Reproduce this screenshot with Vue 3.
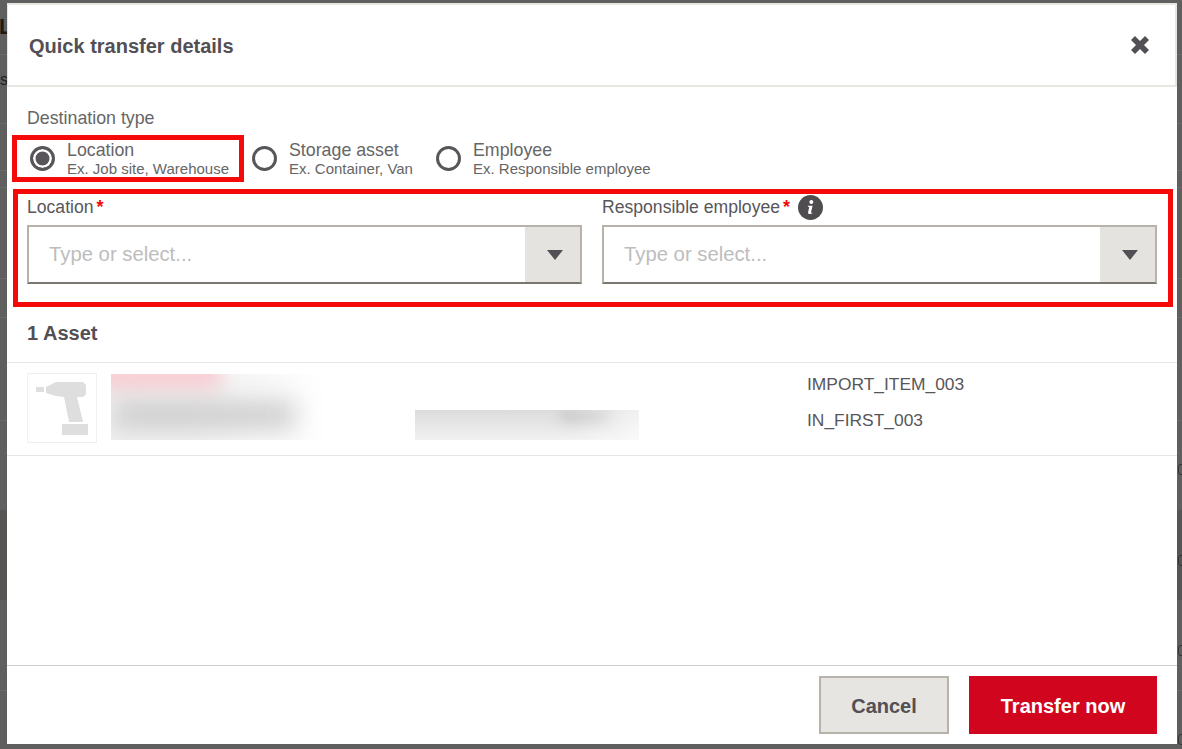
<script setup>
const radios = [
  { title: 'Location', hint: 'Ex. Job site, Warehouse', checked: true, width: 222 },
  { title: 'Storage asset', hint: 'Ex. Container, Van', checked: false, width: 184 },
  { title: 'Employee', hint: 'Ex. Responsible employee', checked: false, width: 240 }
]
const boxes = [464, 555, 645, 734]
</script>

<template>
  <div class="page">
    <span class="bg-letter bg-l">L</span>
    <span class="bg-letter bg-s">s</span>
    <span v-for="y in boxes" :key="y" class="bg-box" :style="{ top: y + 'px' }"></span>
    <div class="modal">
      <header class="head">
        <h1>Quick transfer details</h1>
        <svg class="close" viewBox="0 0 18 18" width="18" height="18"><path d="M4 0 9 5 14 0 18 4 13 9 18 14 14 18 9 13 4 18 0 14 5 9 0 4Z" fill="#524f55"/></svg>
      </header>

      <section class="form">
        <div class="dest-label">Destination type</div>
        <div class="radios">
          <div v-for="r in radios" :key="r.title" class="radio" :style="{ width: r.width + 'px' }">
            <span class="dot" :class="{ on: r.checked }"></span>
            <div class="radio-text">
              <div class="radio-title">{{ r.title }}</div>
              <div class="radio-hint">{{ r.hint }}</div>
            </div>
          </div>
        </div>
        <div class="fields">
          <div class="field">
            <div class="field-label">Location<span class="req">*</span></div>
            <div class="select">
              <span class="ph">Type or select...</span>
              <span class="arrow"><i></i></span>
            </div>
          </div>
          <div class="field">
            <div class="field-label">Responsible employee<span class="req">*</span>
              <svg class="info" viewBox="0 0 24 24" width="25" height="25"><circle cx="12" cy="12" r="12" fill="#4f4d50"/><circle cx="12.800" cy="6.800" r="1.900" fill="#fff"/><path d="M9.600 10.200h4.400l-1.500 6.400c-.1.500.3.600 1.200.2l-.2 1c-1 .6-4.300 1-3.800-1.300l1.100-5.100-1.300-.2z" fill="#fff"/></svg>
            </div>
            <div class="select">
              <span class="ph">Type or select...</span>
              <span class="arrow"><i></i></span>
            </div>
          </div>
        </div>
      </section>

      <h2 class="count">1 Asset</h2>

      <div class="asset">
        <div class="thumb">
          <svg viewBox="0 0 68 68" width="68" height="68"><path d="M8 13h8v5H8zM18 13 28 8H55L58 11V20L55 23H49L55 48H41L36 23 28 22 18 19Z" fill="#dedede"/><rect x="34" y="50" width="26" height="11" fill="#dedede"/></svg>
        </div>
        <div class="blur-a"><div class="blur-fade"></div><div class="blur-red"></div><div class="blur-gray"></div></div>
        <div class="blur-b"><div class="blur-streak"></div></div>
        <div class="codes">
          <div>IMPORT_ITEM_003</div>
          <div>IN_FIRST_003</div>
        </div>
      </div>

      <footer class="foot">
        <button class="btn cancel">Cancel</button>
        <button class="btn go">Transfer now</button>
      </footer>
    </div>
    <div class="mark mark-radio"></div>
    <div class="mark mark-fields"></div>
  </div>
</template>

<style>
html, body { margin: 0; background: #5f5f5f; }
</style>

<style scoped>
.page {
  position: relative;
  width: 1182px;
  height: 749px;
  box-sizing: border-box;
  padding: 3px 5px 5px 7px;
  overflow: hidden;
  background-color: #5f5f5f;
  background-image:
    linear-gradient(#6a6a6a, #6a6a6a),
    linear-gradient(#6a6a6a, #6a6a6a),
    linear-gradient(#6a6a6a, #6a6a6a),
    linear-gradient(#6a6a6a, #6a6a6a),
    linear-gradient(#6a6a6a, #6a6a6a),
    linear-gradient(#6a6a6a, #6a6a6a),
    linear-gradient(#6a6a6a, #6a6a6a),
    linear-gradient(#6a6a6a, #6a6a6a),
    linear-gradient(#565553, #565553);
  background-size: 100% 1px, 100% 1px, 100% 1px, 100% 1px, 100% 1px, 100% 1px, 100% 1px, 100% 1px, 100% 90px;
  background-position: 0 54px, 0 123px, 0 170px, 0 187px, 0 278px, 0 317px, 0 420px, 0 690px, 0 510px;
  background-repeat: no-repeat;
  font-family: "Liberation Sans", Arial, sans-serif;
  color: #58565a;
}
.bg-letter { position: absolute; left: 0; color: #1f1a15; }
.bg-l { top: 14px; font-size: 22px; font-weight: 700; left: -1px; }
.bg-s { top: 71px; font-size: 16px; color: #222; left: 0; }
.bg-box {
  position: absolute;
  left: 1178px;
  width: 12px;
  height: 11px;
  box-sizing: border-box;
  border: 1px solid #333;
  border-radius: 3px;
}
.modal {
  position: relative;
  height: 741px;
  background: #fff;
  display: flex;
  flex-direction: column;
}
.head {
  box-sizing: border-box;
  height: 84px;
  flex: none;
  border: 2px solid #e7e6e0;
  border-left-width: 1px;
  display: flex;
  align-items: center;
  justify-content: space-between;
  padding: 0 26px 0 21px;
}
.head h1 { margin: 2px 0 0; font-size: 20px; font-weight: 700; color: #524f55; }
.close { display: block; margin-top: -1px; }
.form { padding: 20px 20px 0; flex: none; }
.dest-label { font-size: 17.800px; line-height: 22px; color: #666; }
.radios { display: flex; height: 46px; margin-top: 9px; }
.radio { display: flex; align-items: flex-start; box-sizing: border-box; padding-left: 3px; }
.dot {
  flex: none;
  box-sizing: border-box;
  width: 25px;
  height: 25px;
  margin-top: 8px;
  border: 3px solid #58565a;
  border-radius: 50%;
  background: #fff;
}
.dot.on { background: #58565a; box-shadow: inset 0 0 0 2.500px #fff; }
.radio-text { margin-left: 12px; white-space: nowrap; }
.radio-title { font-size: 17.800px; line-height: 18px; margin-top: 3px; color: #666; }
.radio-hint { font-size: 15px; line-height: 18px; margin-top: 1px; color: #666; }
.fields { display: grid; grid-template-columns: 555px 555px; column-gap: 20px; margin-top: 10px; }
.field-label { display: flex; align-items: center; height: 26px; font-size: 17.600px; color: #58565a; }
.req { color: #f50a0a; font-weight: 700; margin-left: 3px; font-size: 18px; }
.info { margin-left: 8px; }
.select {
  box-sizing: border-box;
  margin-top: 5px;
  height: 59px;
  display: flex;
  align-items: stretch;
  justify-content: space-between;
  border: 2px solid #b7b3ab;
  border-bottom-color: #7a7770;
}
.ph { font-size: 20.300px; line-height: 55px; color: #bdbdbd; padding-left: 20px; }
.arrow {
  width: 55px;
  box-sizing: border-box;
  padding-left: 5px;
  background: #e4e3df;
  display: flex;
  align-items: center;
  justify-content: center;
}
.arrow i {
  display: block;
  width: 0;
  height: 0;
  border-left: 8px solid transparent;
  border-right: 8px solid transparent;
  border-top: 10px solid #524f55;
}
.count { margin: 0; padding: 37px 20px 0; font-size: 20px; line-height: 24px; height: 24px; font-weight: 700; color: #524f55; flex: none; }
.asset {
  flex: none;
  box-sizing: border-box;
  margin-top: 17px;
  height: 94px;
  border-top: 1px solid #e6e6e6;
  border-bottom: 1px solid #e6e6e6;
  position: relative;
  display: flex;
  padding: 10px 20px 0;
}
.thumb {
  box-sizing: border-box;
  flex: none;
  width: 70px;
  height: 70px;
  border: 1px solid #f0f0f0;
}
.thumb svg { display: block; }
.blur-a {
  flex: none;
  width: 216px;
  height: 66px;
  margin: 1px 0 0 14px;
  position: relative;
  overflow: hidden;
}
.blur-fade {
  position: absolute;
  inset: 0;
  background: linear-gradient(to right, #f0f0f0 35%, #fff 100%);
}
.blur-red {
  position: absolute;
  left: -20px;
  top: -14px;
  width: 130px;
  height: 30px;
  background: #f8cdd3;
  filter: blur(10px);
}
.blur-gray {
  position: absolute;
  left: 2px;
  top: 28px;
  width: 182px;
  height: 26px;
  background: #cccccc;
  filter: blur(12px);
}
.blur-b {
  flex: none;
  width: 224px;
  height: 30px;
  margin: 37px 0 0 88px;
  position: relative;
  overflow: hidden;
  background: linear-gradient(to bottom, #dcdcdc, #f1f1f1);
  mask-image: linear-gradient(to right, #000 70%, rgba(0,0,0,.4));
}
.blur-streak {
  position: absolute;
  left: 145px;
  top: 0;
  width: 50px;
  height: 12px;
  background: #cbcbcb;
  filter: blur(6px);
}
.codes {
  margin-left: 168px;
  font-size: 17.400px;
  line-height: 36px;
  margin-top: -7px;
  color: #58565a;
  white-space: nowrap;
}
.foot {
  margin-top: auto;
  flex: none;
  box-sizing: border-box;
  height: 79px;
  border-top: 1px solid #cfcfcf;
  display: flex;
  justify-content: flex-end;
  gap: 20px;
  padding: 10px 20px 0;
}
.btn {
  box-sizing: border-box;
  height: 58px;
  padding-top: 3px;
  font-family: inherit;
  font-size: 20px;
  font-weight: 700;
  border-radius: 0;
  cursor: pointer;
}
.cancel { width: 130px; background: #e6e5e1; border: 2px solid #b7b3ab; color: #524f55; }
.go { width: 188px; background: #d2051e; border: 0; color: #fff; }
.mark { position: absolute; box-sizing: border-box; border: 5px solid #f50a0a; pointer-events: none; }
.mark-radio { left: 12px; top: 135px; width: 232px; height: 47px; }
.mark-fields { left: 13px; top: 189px; width: 1160px; height: 118px; }
</style>
